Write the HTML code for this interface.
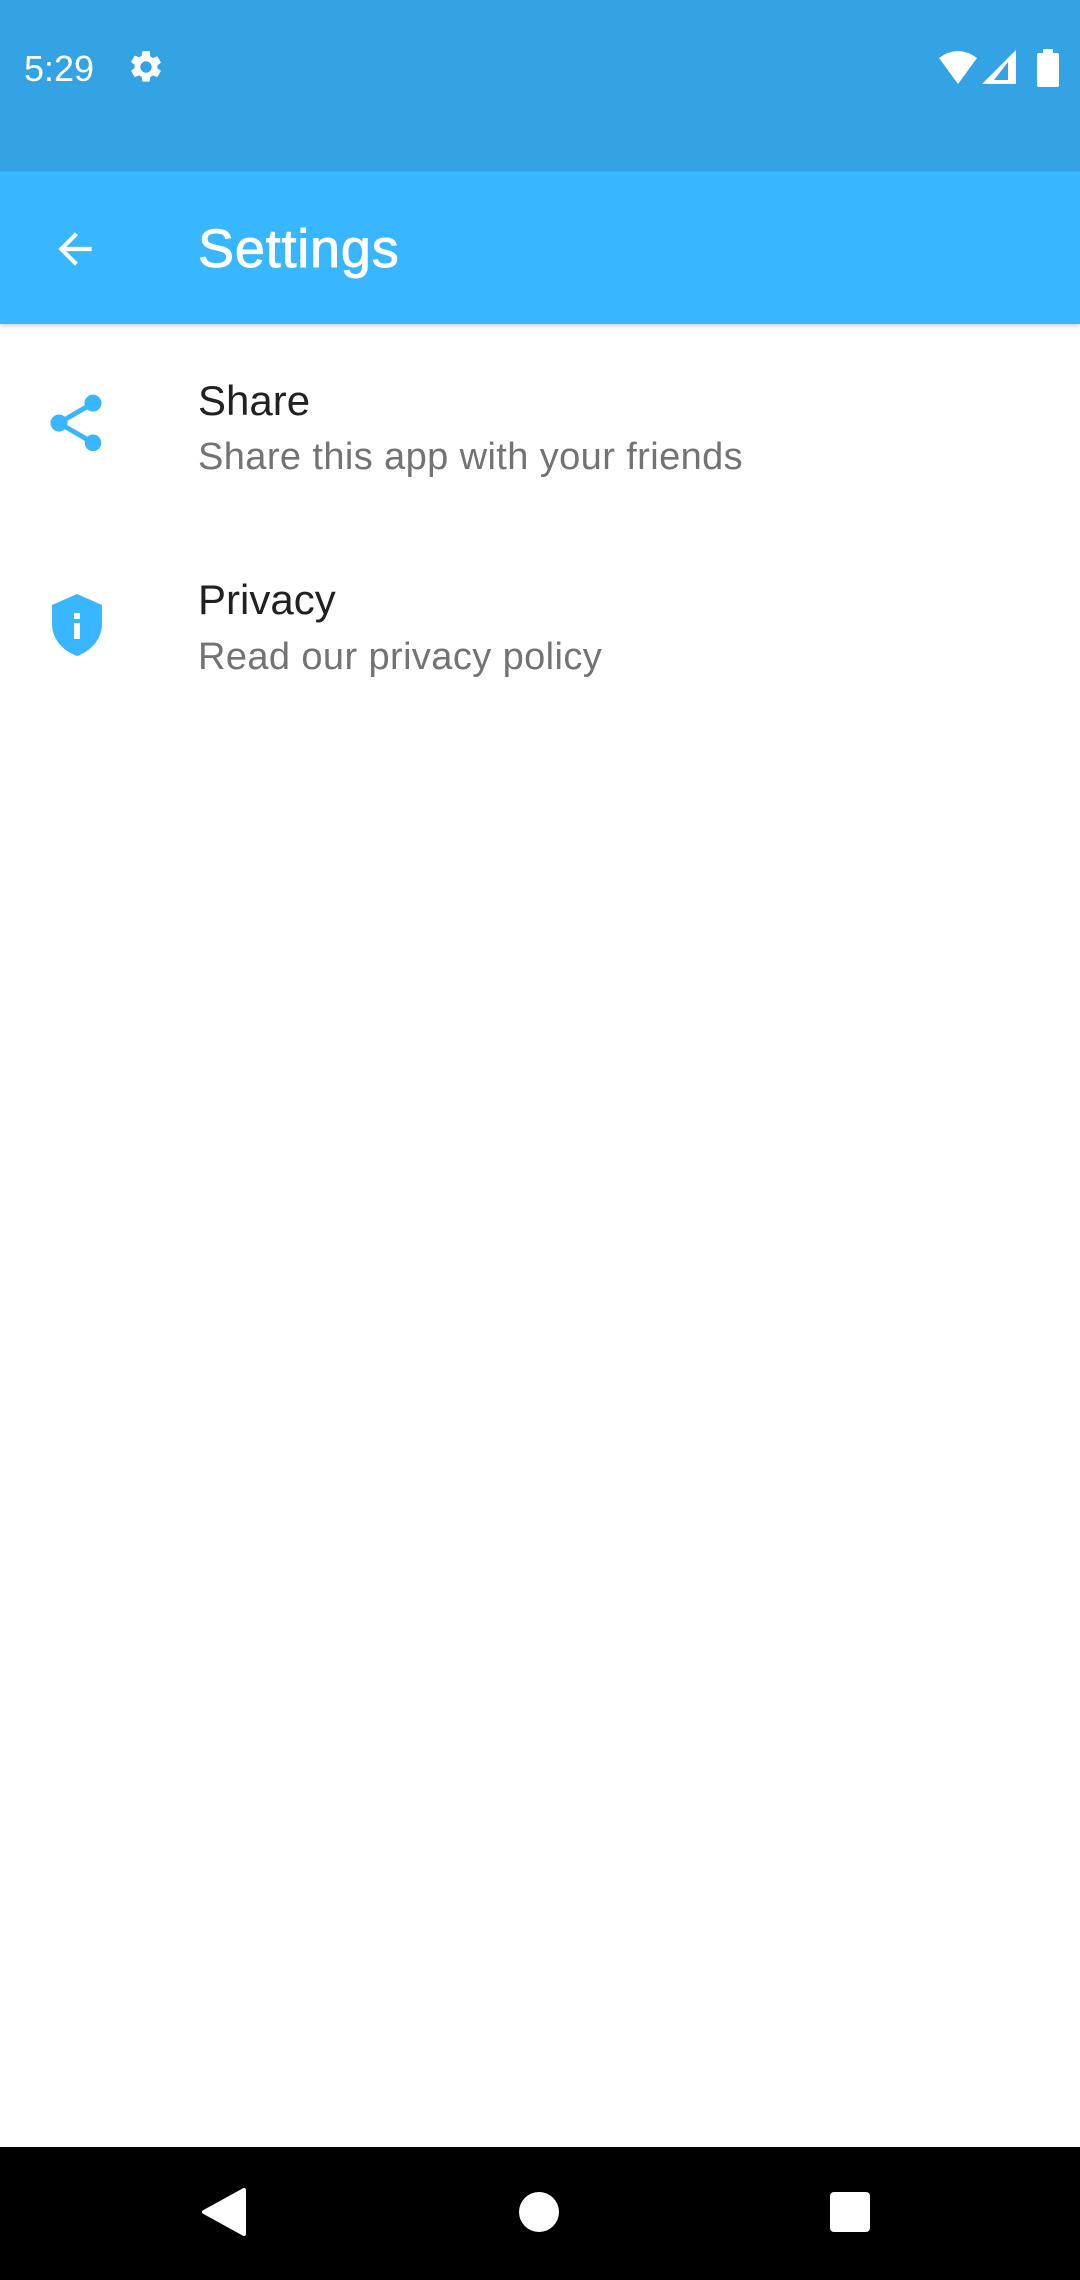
<!DOCTYPE html>
<html><head><meta charset="utf-8"><style>
*{margin:0;padding:0;box-sizing:border-box}
body{width:1080px;height:2280px;background:#fff;position:relative;overflow:hidden;font-family:"Liberation Sans",sans-serif}
.abs{position:absolute}
</style></head><body>
<div class="abs" style="left:0;top:0;width:1080px;height:171px;background:#33a3e3"></div>
<div class="abs" style="left:24px;top:46px;font-size:36px;color:#fff;line-height:46px">5:29</div>
<svg class="abs" style="left:127px;top:48px" width="38" height="38" viewBox="0 0 24 24"><path fill="#fff" d="M19.14 12.94c.04-.3.06-.61.06-.94s-.02-.64-.07-.94l2.03-1.580a.49.49 0 0 0 .12-.61l-1.92-3.32a.49.49 0 0 0-.59-.22l-2.39.96c-.5-.38-1.03-.7-1.62-.94l-.36-2.54A.48.48 0 0 0 13.92 2h-3.84c-.24 0-.43.17-.47.41l-.36 2.54c-.59.24-1.130.57-1.62.94l-2.39-.96a.48.48 0 0 0-.59.22L2.74 8.47c-.12.21-.08.47.12.61l2.03 1.58c-.05.3-.09.63-.09.94s.02.64.07.94l-2.03 1.58a.49.49 0 0 0-.12.61l1.92 3.32c.12.22.37.29.59.22l2.39-.96c.5.38 1.03.7 1.62.94l.36 2.54c.05.24.24.41.48.41h3.84c.24 0 .44-.17.47-.41l.36-2.54c.59-.24 1.13-.56 1.62-.94l2.39.96c.22.08.47 0 .59-.22l1.92-3.32a.47.47 0 0 0-.12-.61zM12 15.6A3.6 3.6 0 1 1 12 8.4a3.6 3.6 0 0 1 0 7.2z"/></svg>
<svg class="abs" style="left:936px;top:48px" width="124" height="40" viewBox="0 0 124 40"><path fill="#fff" d="M3 10 Q22 -4 41 10 L22 36 Z"/><path fill="#fff" d="M46 36 L80 2 V36 Z M72 14 L58 32 H72 Z" fill-rule="evenodd"/><rect x="101" y="5" width="22" height="34" rx="2" fill="#fff"/><rect x="107" y="1" width="10" height="6" fill="#fff"/></svg>
<div class="abs" style="left:0;top:171px;width:1080px;height:153px;background:#38b6ff;box-shadow:0 2px 4px rgba(0,0,0,.18)"></div>
<svg class="abs" style="left:50px;top:224px" width="50" height="50" viewBox="0 0 24 24"><path fill="#fff" d="M20 11H7.83l5.59-5.590L12 4l-8 8 8 8 1.41-1.41L7.83 13H20v-2z"/></svg>
<div class="abs" style="left:198px;top:214px;font-size:54px;color:#fff;line-height:70px;letter-spacing:0.8px;-webkit-text-stroke:0.9px #fff">Settings</div>
<svg class="abs" style="left:42px;top:389px" width="68" height="68" viewBox="0 0 24 24"><path fill="#38b6ff" d="M18 16.08c-.76 0-1.44.3-1.96.77L8.91 12.7c.05-.23.09-.46.09-.7s-.04-.47-.09-.7l7.05-4.11c.54.5 1.25.81 2.04.81 1.66 0 3-1.34 3-3s-1.34-3-3-3-3 1.34-3 3c0 .24.04.47.09.7L8.04 9.81C7.5 9.31 6.79 9 6 9c-1.66 0-3 1.34-3 3s1.34 3 3 3c.79 0 1.5-.31 2.04-.81l7.12 4.16c-.05.21-.08.43-.08.65 0 1.61 1.31 2.92 2.92 2.92s2.92-1.31 2.92-2.92-1.31-2.92-2.92-2.92z"/></svg>
<div class="abs" style="left:198px;top:376px;font-size:42px;color:#212121;line-height:50px">Share</div>
<div class="abs" style="left:198px;top:433px;font-size:38px;color:#737373;line-height:48px;letter-spacing:0.4px">Share this app with your friends</div>
<svg class="abs" style="left:52px;top:594px" width="50" height="62" viewBox="0 0 50 62"><path fill="#38b6ff" d="M25 0 L50 11 V30 C50 45 39 57 25 62 C11 57 0 45 0 30 V11 Z"/><rect x="22" y="19" width="6" height="6" fill="#fff"/><rect x="22" y="29" width="6" height="16" fill="#fff"/></svg>
<div class="abs" style="left:198px;top:575px;font-size:42px;color:#212121;line-height:50px">Privacy</div>
<div class="abs" style="left:198px;top:633px;font-size:38px;color:#737373;line-height:48px;letter-spacing:0.4px">Read our privacy policy</div>
<div class="abs" style="left:0;top:2147px;width:1080px;height:133px;background:#000"></div>
<svg class="abs" style="left:200px;top:2188px" width="46" height="48" viewBox="0 0 46 48"><path fill="#fff" d="M44 2 V46 L4 24 Z" stroke="#fff" stroke-width="4" stroke-linejoin="round"/></svg>
<div class="abs" style="left:519px;top:2192px;width:40px;height:40px;border-radius:50%;background:#fff"></div>
<div class="abs" style="left:830px;top:2192px;width:40px;height:40px;border-radius:4px;background:#fff"></div>
</body></html>
